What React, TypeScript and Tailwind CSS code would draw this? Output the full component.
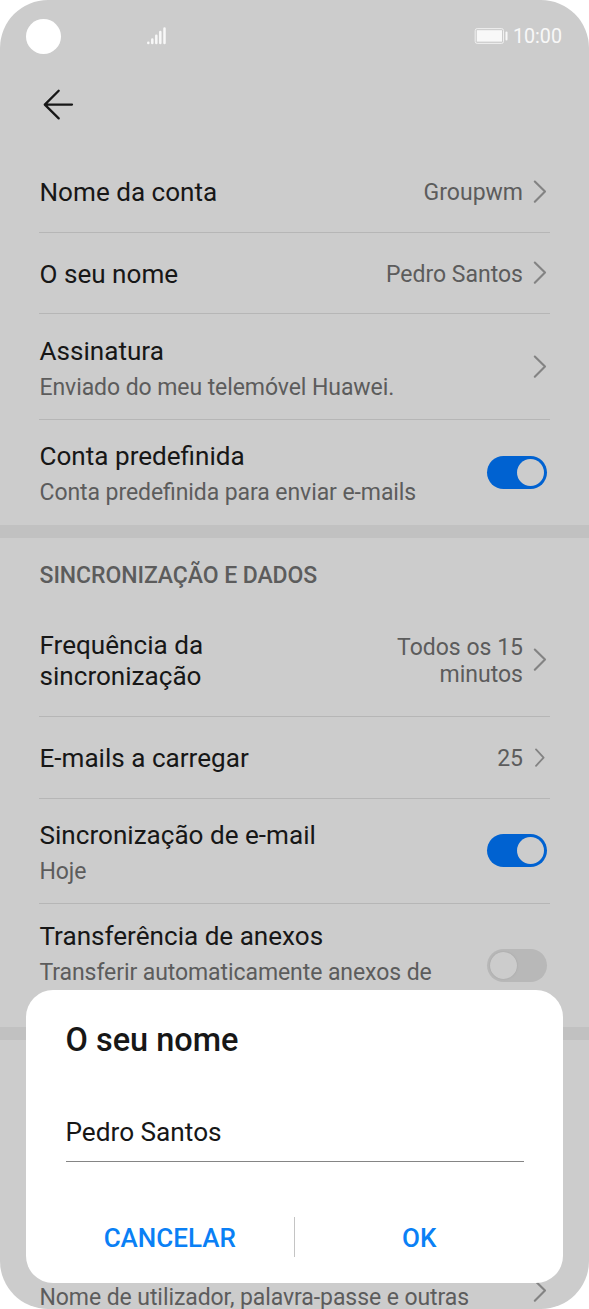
import type { ReactNode } from 'react'
import clsx from 'clsx'

function Chevron({ small = false }: { small?: boolean }) {
  return (
    <svg width="14" height="24" viewBox="0 0 14 24" fill="none" stroke="#838383"
      strokeWidth={small ? 1.8 : 2.1} strokeLinecap="round" strokeLinejoin="round" className="shrink-0">
      <path d={small ? 'M3 3.4 L10.6 11.6 L3 19.8' : 'M1.8 1.5 L12 11.6 L1.8 21.7'} />
    </svg>
  )
}

function Toggle({ on }: { on: boolean }) {
  return (
    <button type="button" role="switch" aria-checked={on}
      className={clsx(
        'mb-px flex h-[33px] w-[60px] shrink-0 items-center rounded-full px-[3px]',
        on ? 'justify-end bg-[#0062d1]' : 'justify-start bg-[#b8b8b8]'
      )}>
      <span className={clsx('size-[27px] rounded-full bg-[#cccccc]', !on && 'shadow-[0_0_2px_#a0a0a0]')} />
    </button>
  )
}

interface RowProps {
  title: string
  subtitle?: string
  value?: string
  control: ReactNode
  className: string
  textWidth?: string
  // keeps room for a second subtitle line
  tall?: boolean
  last?: boolean
}

function Row({ title, subtitle, value, control, className, textWidth, tall, last }: RowProps) {
  return (
    <div className={clsx('mr-[39px] ml-[39px] flex items-center justify-between pr-[3px] pl-[0.5px]', !last && 'border-b border-[#b6b6b6]', className)}>
      <div className={clsx('shrink-0 pt-[2px]', textWidth)}>
        <div className="text-[26.1px] leading-[31px] text-[#171717]">{title}</div>
        {subtitle && (
          <div className={clsx("mt-[7px] text-[23px] leading-[27px] tracking-[-0.08px] text-[#5c5c5c] [font-feature-settings:'liga']", tall && 'h-[54px]')}>
            {subtitle}
          </div>
        )}
      </div>
      <div className="flex items-center gap-[10px]">
        {value && <div className="pt-[2px] text-right text-[23px] leading-[27px] whitespace-pre-line text-[#5c5c5c]">{value}</div>}
        {control}
      </div>
    </div>
  )
}

function StatusBar() {
  return (
    <div className="flex h-[73px] items-center pr-[27px] pl-[26px]">
      <span className="size-[35px] rounded-full bg-white" />
      <svg width="22" height="20" viewBox="0 0 22 20" className="ml-[85px]" stroke="#f8f8f8" strokeWidth="2.5" strokeLinecap="round">
        <path d="M2.3 15.7V16M6.3 12.4V16M10.3 8.7V16M14.3 5V16M18.5 1.5V16" />
      </svg>
      <div className="ml-auto flex items-center gap-[5px] text-[#f8f8f8]">
        <svg width="34" height="16" viewBox="0 0 34 16" fill="#f8f8f8" className="mb-px">
          <rect x="1.2" y="0.6" width="28.3" height="14.8" rx="2" fill="none" stroke="#f0f0f0" />
          <rect x="2.8" y="2.2" width="25.2" height="11.4" />
          <rect x="31.5" y="3.6" width="2" height="8.8" rx="1" />
        </svg>
        <span className="text-[19.7px] leading-6">10:00</span>
      </div>
    </div>
  )
}

function NameDialog() {
  return (
    <div className="absolute top-[990px] left-[26px] h-[293px] w-[537px] rounded-[27px] bg-white px-[39.5px] pt-[31px]">
      <h2 className="text-[32.5px] leading-[38px] font-medium text-[#171717]">O seu nome</h2>
      <div className="mt-[48px] h-[55px] border-b-[1.5px] border-[#858585] pt-[10px] text-[26.2px] leading-[31px] text-[#171717]">
        Pedro Santos
      </div>
      <div className="mt-[55px] flex h-10 items-center text-[26px] font-medium text-[#0a80f5]">
        <button type="button" className="flex-1 pt-[2px] pr-[20px]">CANCELAR</button>
        <span className="h-10 w-px bg-[#c4c4c4]" />
        <button type="button" className="flex-1 pt-[2px] pl-[20px]">OK</button>
      </div>
    </div>
  )
}

export default function App() {
  return (
    <div className="bg-white font-[Roboto,sans-serif]">
      <div className="relative h-[1309px] w-[589px] overflow-hidden rounded-[48px] bg-[#cccccc]">
        <StatusBar />
        <div className="flex h-[78px] items-start pt-[16px] pl-[43px]">
          <svg width="32" height="32" viewBox="0 0 32 32" fill="none" stroke="#171717" strokeWidth="2.3" strokeLinecap="round" strokeLinejoin="round">
            <path d="M15.7 1.8L1.8 15.6L15.7 29.4M1.8 15.6H29" />
          </svg>
        </div>
        <Row title="Nome da conta" value="Groupwm" control={<Chevron />} className="h-[82px]" />
        <Row title="O seu nome" value="Pedro Santos" control={<Chevron />} className="h-[81px]" />
        <Row title="Assinatura" subtitle="Enviado do meu telemóvel Huawei." control={<Chevron />} className="h-[106px] pt-px" />
        <Row title="Conta predefinida" subtitle="Conta predefinida para enviar e-mails" control={<Toggle on />} className="h-[105px]" last />
        <div className="h-[13px] bg-[#c1c1c1]" />
        <div className="h-[78px] pt-[24px] pl-[39.6px] text-[23px] leading-[27px] font-medium tracking-[-0.08px] text-[#5c5c5c]">
          SINCRONIZAÇÃO E DADOS
        </div>
        <Row title="Frequência da sincronização" value={'Todos os 15\nminutos'} control={<Chevron />} className="h-[101px] pb-[12px]" textWidth="w-[200px]" />
        <Row title="E-mails a carregar" value="25" control={<Chevron small />} className="h-[82px]" />
        <Row title="Sincronização de e-mail" subtitle="Hoje" control={<Toggle on />} className="h-[105px]" />
        <Row title="Transferência de anexos" subtitle="Transferir automaticamente anexos de" control={<Toggle on={false} />} className="h-[123px]" tall last />
        <div className="h-[13px] bg-[#c1c1c1]" />
        <div className="h-[189px]" />
        <Row title="Conta" subtitle="Nome de utilizador, palavra-passe e outras" control={<Chevron />} className="h-[123px]" tall last />
        <NameDialog />
      </div>
    </div>
  )
}
